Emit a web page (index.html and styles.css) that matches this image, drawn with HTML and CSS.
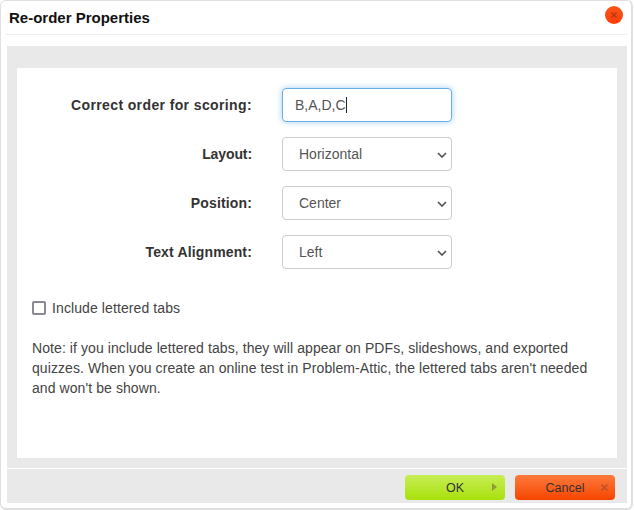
FILE: index.html
```html
<!DOCTYPE html>
<html lang="en">
<head>
  <meta charset="UTF-8" />
  <title>Re-order Properties</title>
  <link rel="stylesheet" href="styles.css">
</head>
<body>
  <div class="dialog">
    <div class="title-bar">
      <div class="title">Re-order Properties</div>
      <button class="close-btn" aria-label="Close">
        <svg width="6" height="6" viewBox="0 0 6 6"><path d="M0.5 0.5L5.5 5.5M5.5 0.5L0.5 5.5" stroke="#b03a12" stroke-width="1.4" fill="none"/></svg>
      </button>
    </div>

    <div class="panel">
      <div class="content">
        <div class="form-row">
          <label class="form-label label-wide">Correct order for scoring:</label>
          <div class="fake-input">B,A,D,C<span class="caret"></span></div>
        </div>
        <div class="form-row">
          <label class="form-label label-narrow">Layout:</label>
          <div class="select-wrap">
            <select class="form-select"><option>Horizontal</option></select>
            <svg class="chevron" width="10" height="6" viewBox="0 0 10 6"><path d="M1 1L5 5L9 1" stroke="#555" stroke-width="1.7" fill="none"/></svg>
          </div>
        </div>
        <div class="form-row">
          <label class="form-label">Position:</label>
          <div class="select-wrap">
            <select class="form-select"><option>Center</option></select>
            <svg class="chevron" width="10" height="6" viewBox="0 0 10 6"><path d="M1 1L5 5L9 1" stroke="#555" stroke-width="1.7" fill="none"/></svg>
          </div>
        </div>
        <div class="form-row">
          <label class="form-label">Text Alignment:</label>
          <div class="select-wrap">
            <select class="form-select"><option>Left</option></select>
            <svg class="chevron" width="10" height="6" viewBox="0 0 10 6"><path d="M1 1L5 5L9 1" stroke="#555" stroke-width="1.7" fill="none"/></svg>
          </div>
        </div>

        <label class="check-row">
          <span class="check-box"></span>
          Include lettered tabs
        </label>

        <p class="note">Note: if you include lettered tabs, they will appear on PDFs, slideshows, and exported quizzes. When you create an online test in Problem-Attic, the lettered tabs aren't needed and won't be shown.</p>
      </div>

      <div class="footer">
        <button class="btn btn-ok">OK<span class="btn-icon arrow"></span></button>
        <button class="btn btn-cancel">Cancel
          <svg class="btn-icon cross" width="7" height="7" viewBox="0 0 7 7"><path d="M0.5 0.5L6.5 6.5M6.5 0.5L0.5 6.5" stroke="#b5522a" stroke-width="1.4" fill="none"/></svg>
        </button>
      </div>
    </div>
  </div>
</body>
</html>
```

FILE: styles.css
```css
* { box-sizing: border-box; margin: 0; padding: 0; font-family: "Liberation Sans", Arial, sans-serif; }
body { background: #fff; width: 634px; height: 510px; overflow: hidden; }

.dialog {
  width: 633px;
  height: 510px;
  background: #fff;
  border: 2px solid #dfdfdf;
  border-top-width: 1px;
  border-left-width: 1px;
  border-radius: 6px;
  padding: 0 4px 5px 5px;
  display: flex;
  flex-direction: column;
}

.title-bar {
  height: 34px;
  border-bottom: 1px solid #eee;
  display: flex;
  align-items: center;
  justify-content: space-between;
  padding: 0 4px 0 3px;
  flex-shrink: 0;
}

.title { font-size: 15px; font-weight: bold; color: #111; }

.close-btn {
  width: 18px;
  height: 18px;
  margin-top: -5px;
  border: none;
  border-radius: 50%;
  background: linear-gradient(to bottom, #f9561a, #ff3d06);
  display: flex;
  align-items: center;
  justify-content: center;
}

.panel {
  flex: 1;
  margin: 11px 0 0 1px;
  width: 620px;
  background: #e9e9e9;
  display: flex;
  flex-direction: column;
}

.content {
  margin: 22px 10px 0 10px;
  height: 390px;
  background: #fff;
  padding-top: 20px;
  flex-shrink: 0;
}

.form-row { display: flex; align-items: center; height: 34px; margin-bottom: 15px; }

.form-label {
  width: 235px;
  margin-right: 30px;
  text-align: right;
  font-size: 14px;
  font-weight: bold;
  color: #333;
  letter-spacing: 0.15px;
}
.label-wide { letter-spacing: 0.38px; }
.label-narrow { letter-spacing: -0.1px; }

.fake-input {
  width: 170px;
  height: 34px;
  border: 1px solid #66afe9;
  border-radius: 4px;
  box-shadow: 0 0 6px rgba(102, 175, 233, 0.6);
  padding-left: 12px;
  font-size: 14px;
  line-height: 32px;
  color: #555;
  display: flex;
  align-items: center;
}

.caret { width: 1px; height: 16px; background: #222; }

.select-wrap { position: relative; width: 170px; height: 34px; }

.form-select {
  appearance: none;
  width: 170px;
  height: 34px;
  border: 1px solid #ccc;
  border-radius: 4px;
  background: #fff;
  padding-left: 16px;
  font-size: 14px;
  color: #555;
}

.chevron { position: absolute; top: 15px; right: 5px; }

.check-row {
  display: flex;
  align-items: center;
  gap: 6px;
  margin: 31px 0 0 15px;
  height: 16px;
  font-size: 14px;
  color: #444;
  letter-spacing: 0.1px;
}

.check-box {
  width: 14px;
  height: 14px;
  border: 2px solid #8a8a94;
  border-radius: 2px;
}

.note {
  margin: 22px 15px 0 15px;
  font-size: 14px;
  line-height: 20px;
  color: #444;
  letter-spacing: 0.08px;
}

.footer {
  flex: 1;
  margin-top: 10px;
  border-top: 1px solid #fff;
  display: flex;
  justify-content: flex-end;
  align-items: flex-start;
  gap: 10px;
  padding: 6px 12px 0 0;
}

.btn {
  position: relative;
  width: 100px;
  height: 25px;
  border: none;
  border-radius: 4px;
  font-size: 12.5px;
  color: #333;
}

.btn-ok { background: linear-gradient(to bottom, #c7ee55, #a8e00c); }
.btn-cancel { background: linear-gradient(to bottom, #ff7a3c, #f54500); }

.btn-icon { position: absolute; top: 8px; right: 8px; }

.arrow {
  width: 0;
  height: 0;
  border-left: 5px solid #8d9c3a;
  border-top: 4px solid transparent;
  border-bottom: 4px solid transparent;
}

.cross { top: 9px; right: 7px; }
```
